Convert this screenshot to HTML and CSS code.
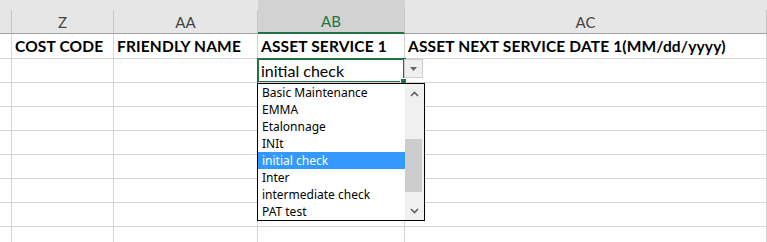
FILE: index.html
```html
<!DOCTYPE html>
<html lang="en">
<head>
    <meta charset="UTF-8">
    <title>Asset sheet</title>
    <link rel="stylesheet" href="styles.css">
</head>
<body>
    <div class="sheet">
        <!-- top strip above the column letters -->
        <div class="strip"></div>
        <div class="strip"></div>
        <div class="strip"></div>
        <div class="strip sel"></div>
        <div class="strip"></div>

        <div class="col-head corner"></div>
        <div class="col-head">Z</div>
        <div class="col-head">AA</div>
        <div class="col-head active">AB</div>
        <div class="col-head">AC</div>

        <div class="cell"></div>
        <div class="cell title">COST CODE</div>
        <div class="cell title">FRIENDLY NAME</div>
        <div class="cell title">ASSET SERVICE 1</div>
        <div class="cell title">ASSET NEXT SERVICE DATE 1(MM/dd/yyyy)</div>

        <div class="cell"></div>
        <div class="cell"></div>
        <div class="cell"></div>
        <div class="cell picked">
            initial check
            <span class="handle"></span>
            <span class="drop-btn"><svg width="7" height="4" viewBox="0 0 7 4"><path d="M0 0h7L3.5 4z" fill="#666"/></svg></span>
            <div class="list">
                <ul class="items">
                    <li>Basic Maintenance</li>
                    <li>EMMA</li>
                    <li>Etalonnage</li>
                    <li>INIt</li>
                    <li class="hi">initial check</li>
                    <li>Inter</li>
                    <li>intermediate check</li>
                    <li>PAT test</li>
                </ul>
                <div class="scroll">
                    <svg class="arr up" width="9" height="6" viewBox="0 0 9 6"><path d="M1 5l3.5-3.5L8 5" stroke="#606060" stroke-width="1.6" fill="none"/></svg>
                    <div class="thumb"></div>
                    <svg class="arr down" width="9" height="6" viewBox="0 0 9 6"><path d="M1 1l3.5 3.5L8 1" stroke="#606060" stroke-width="1.6" fill="none"/></svg>
                </div>
            </div>
        </div>
        <div class="cell"></div>

        <div class="cell"></div><div class="cell"></div><div class="cell"></div><div class="cell"></div><div class="cell"></div>
        <div class="cell"></div><div class="cell"></div><div class="cell"></div><div class="cell"></div><div class="cell"></div>
        <div class="cell"></div><div class="cell"></div><div class="cell"></div><div class="cell"></div><div class="cell"></div>
        <div class="cell"></div><div class="cell"></div><div class="cell"></div><div class="cell"></div><div class="cell"></div>
        <div class="cell"></div><div class="cell"></div><div class="cell"></div><div class="cell"></div><div class="cell"></div>
        <div class="cell"></div><div class="cell"></div><div class="cell"></div><div class="cell"></div><div class="cell"></div>
        <div class="cell"></div><div class="cell"></div><div class="cell"></div><div class="cell"></div><div class="cell"></div>
    </div>
</body>
</html>
```

FILE: styles.css
```css
body {
    margin: 0;
    background: #fff;
    font-family: 'Lato', 'Liberation Sans', sans-serif;
    overflow: hidden;
}
.sheet {
    display: grid;
    grid-template-columns: 12px 102px 144px 147px 1fr;
    grid-template-rows: 10px 24px 25px repeat(8, 24px);
}
.strip {
    background: #e6e6e6;
}
.strip.sel {
    background: #d2d2d2;
}
.col-head {
    background: #e6e6e6;
    border-right: 1px solid #c6c6c6;
    border-bottom: 1px solid #9f9f9f;
    color: #444;
    font-size: 15px;
    display: flex;
    align-items: center;
    justify-content: center;
}
.col-head.active {
    background: #d2d2d2;
    color: #217346;
    border-bottom: 2px solid #217346;
}
.cell {
    border-right: 1px solid #d4d4d4;
    border-bottom: 1px solid #d4d4d4;
    font-size: 16px;
    color: #000;
    padding-left: 3px;
    display: flex;
    align-items: center;
    white-space: nowrap;
}
.title {
    font-weight: bold;
    font-size: 15.5px;
    letter-spacing: 0.15px;
}
.picked {
    position: relative;
    box-shadow: 0 0 0 1px #217346 inset;
    outline: 1px solid #217346;
    outline-offset: 0;
}
.handle {
    position: absolute;
    right: -3px;
    bottom: -3px;
    width: 5px;
    height: 5px;
    background: #217346;
    border: 1px solid #fff;
}
.drop-btn {
    position: absolute;
    left: 146px;
    top: 0;
    width: 17px;
    height: 17px;
    background: #f0f0f0;
    border: 1px solid #cfcfcf;
    display: flex;
    align-items: center;
    justify-content: center;
}
.list {
    position: absolute;
    left: -1px;
    top: 24px;
    width: 166px;
    height: 136px;
    border: 1px solid #000;
    background: #fff;
    display: flex;
    z-index: 2;
}
.items {
    list-style: none;
    margin: 0;
    padding: 0;
    flex: 1;
    font-family: 'Noto Sans', sans-serif;
    font-size: 12px;
}
.items li {
    height: 17px;
    line-height: 17px;
    padding-left: 4px;
}
.items li.hi {
    background: #3399ff;
    color: #fff;
}
.scroll {
    width: 19px;
    background: #f0f0f0;
    position: relative;
}
.arr {
    position: absolute;
    left: 5px;
}
.arr.up { top: 7px; }
.arr.down { bottom: 6px; }
.thumb {
    position: absolute;
    left: 0;
    right: 2px;
    top: 55px;
    height: 53px;
    background: #cdcdcd;
}
```
